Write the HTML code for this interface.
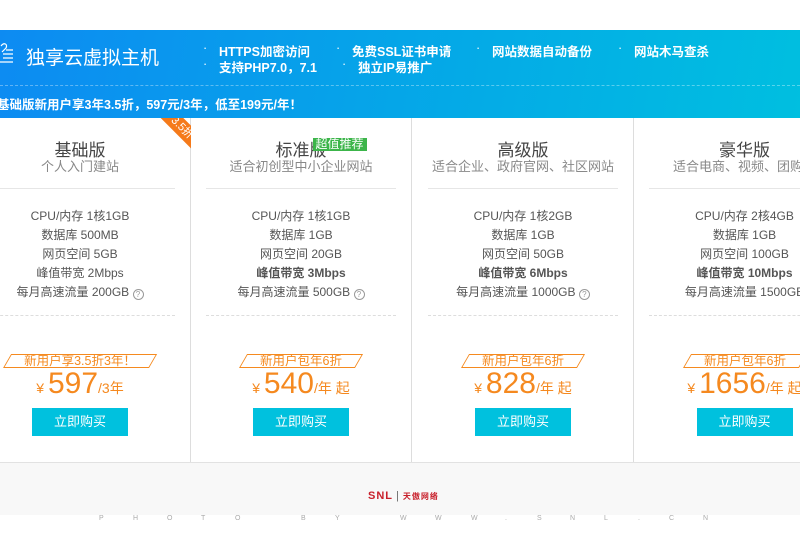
<!DOCTYPE html>
<html><head><meta charset="utf-8"><style>
*{margin:0;padding:0;box-sizing:border-box}
body{width:800px;height:533px;overflow:hidden;background:#fff;font-family:"Liberation Sans","Noto Sans CJK SC",sans-serif;position:relative}
.hd{position:absolute;left:0;top:30px;width:800px;height:88px;background:linear-gradient(100deg,#0d8bf2 0%,#05a6e8 50%,#00bfe0 100%);color:#fff}
.t{position:absolute;left:26px;top:13px;font-size:19px}
.f{position:absolute;font-size:12.5px;font-weight:bold}
.f:before{content:"·";position:absolute;left:-16px;font-weight:normal}
.dash{position:absolute;left:0;top:55px;width:800px;border-top:1px dashed rgba(255,255,255,.35)}
.promo{position:absolute;left:-3px;top:64px;font-size:12.5px;font-weight:bold}
.card{position:absolute;top:118px;width:221px;height:344px;border-right:1px solid #ddd;text-align:center}
.card h3{position:absolute;left:0;right:0;top:18px;font-size:17px;font-weight:normal;color:#444}
.card .s{position:absolute;left:0;right:0;top:38px;font-size:13px;color:#888}
.card .l1{position:absolute;left:15px;right:15px;top:70px;border-top:1px solid #e6e6e6}
.card .sp{position:absolute;left:0;right:0;top:89px;font-size:12px;color:#555;line-height:19px}
.card .l2{position:absolute;left:15px;right:15px;top:197px;border-top:1px dashed #ddd}
.q{display:inline-block;width:11px;height:11px;border:1px solid #999;border-radius:50%;font-size:8px;line-height:9px;color:#999;vertical-align:-1px}
.bd{position:absolute;top:236px;height:14px;left:50%;transform:translateX(-50%) skewX(-30deg);border:1px solid #f58a1f;color:#f58a1f;font-size:12.5px;line-height:12px;padding:0 16px;white-space:nowrap}
.bd span{display:inline-block;transform:skewX(30deg)}
.pr{position:absolute;left:0;right:0;top:249px;color:#f5891f;font-size:14px;line-height:34px}
.pr b{font-size:30px;font-weight:normal}
.btn{position:absolute;top:290px;left:50%;margin-left:-48px;width:96px;height:28px;background:#00c1de;color:#fff;font-size:13px;line-height:28px}
.ft{position:absolute;left:0;top:462px;width:800px;height:53px;background:#f8f8f8;border-top:1px solid #e2e2e2}
.ph{position:absolute;top:515px;font-size:7px;color:#aaa}
</style></head><body>
<div class="hd">
<svg style="position:absolute;left:0;top:12px" width="16" height="24" viewBox="0 0 16 24" fill="none" stroke="#fff" stroke-width="1.2"><path d="M1 4c3-4 7-2 5 2l-4 4"/><path d="M3 12h10M3 16h10M0 20h13M6 8h7"/></svg>
<div class="t">独享云虚拟主机</div>
<div class="f" style="left:219px;top:11px">HTTPS加密访问</div>
<div class="f" style="left:352px;top:11px">免费SSL证书申请</div>
<div class="f" style="left:492px;top:11px">网站数据自动备份</div>
<div class="f" style="left:634px;top:11px">网站木马查杀</div>
<div class="f" style="left:219px;top:27px">支持PHP7.0，7.1</div>
<div class="f" style="left:358px;top:27px">独立IP易推广</div>
<div class="dash"></div>
<div class="promo">基础版新用户享3年3.5折，597元/3年，低至199元/年！</div>
</div>

<div class="card" style="left:-30px">
<h3>基础版</h3><div class="s">个人入门建站</div><div class="l1"></div>
<div class="sp">CPU/内存 1核1GB<br>数据库 500MB<br>网页空间 5GB<br>峰值带宽 2Mbps<br>每月高速流量 200GB <span class="q">?</span></div>
<div class="l2"></div>
<div class="bd"><span>新用户享3.5折3年！</span></div>
<div class="pr">¥ <b>597</b>/3年</div>
<div class="btn">立即购买</div>
</div>
<div style="position:absolute;left:160px;top:118px;width:31px;height:32px;overflow:hidden"><div style="position:absolute;left:-8px;top:2px;width:60px;height:16px;background:#f57a1a;transform:rotate(45deg);color:#fff;font-size:11px;line-height:16px;text-align:center">3.5折</div></div>

<div class="card" style="left:191px">
<h3>标准版<span style="position:absolute;margin-left:-14px;top:2px;background:#3cb54a;color:#fff;font-size:12px;line-height:13px;padding:0 3px">超值推荐</span></h3><div class="s">适合初创型中小企业网站</div><div class="l1"></div>
<div class="sp">CPU/内存 1核1GB<br>数据库 1GB<br>网页空间 20GB<br><b>峰值带宽 3Mbps</b><br>每月高速流量 500GB <span class="q">?</span></div>
<div class="l2"></div>
<div class="bd"><span>新用户包年6折</span></div>
<div class="pr">¥ <b>540</b>/年 起</div>
<div class="btn">立即购买</div>
</div>

<div class="card" style="left:413px">
<h3>高级版</h3><div class="s">适合企业、政府官网、社区网站</div><div class="l1"></div>
<div class="sp">CPU/内存 1核2GB<br>数据库 1GB<br>网页空间 50GB<br><b>峰值带宽 6Mbps</b><br>每月高速流量 1000GB <span class="q">?</span></div>
<div class="l2"></div>
<div class="bd"><span>新用户包年6折</span></div>
<div class="pr">¥ <b>828</b>/年 起</div>
<div class="btn">立即购买</div>
</div>

<div class="card" style="left:634px;width:222px">
<h3>豪华版</h3><div class="s">适合电商、视频、团购类</div><div class="l1"></div>
<div class="sp">CPU/内存 2核4GB<br>数据库 1GB<br>网页空间 100GB<br><b>峰值带宽 10Mbps</b><br>每月高速流量 1500GB</div>
<div class="l2"></div>
<div class="bd"><span>新用户包年6折</span></div>
<div class="pr">¥ <b>1656</b>/年 起</div>
<div class="btn">立即购买</div>
</div>

<div class="ft"><div style="position:absolute;left:368px;top:27px;color:#c8202b;font-size:11px;font-weight:bold;letter-spacing:1px">SNL<span style="font-weight:normal;color:#666;margin:0 3px">|</span><span style="font-size:8px">天傲网络</span></div></div>
<div class="ph" style="left:99px">P</div><div class="ph" style="left:133px">H</div><div class="ph" style="left:167px">O</div><div class="ph" style="left:201px">T</div><div class="ph" style="left:235px">O</div><div class="ph" style="left:301px">B</div><div class="ph" style="left:335px">Y</div><div class="ph" style="left:400px">W</div><div class="ph" style="left:435px">W</div><div class="ph" style="left:471px">W</div><div class="ph" style="left:505px">.</div><div class="ph" style="left:537px">S</div><div class="ph" style="left:570px">N</div><div class="ph" style="left:604px">L</div><div class="ph" style="left:638px">.</div><div class="ph" style="left:669px">C</div><div class="ph" style="left:703px">N</div>
</body></html>
